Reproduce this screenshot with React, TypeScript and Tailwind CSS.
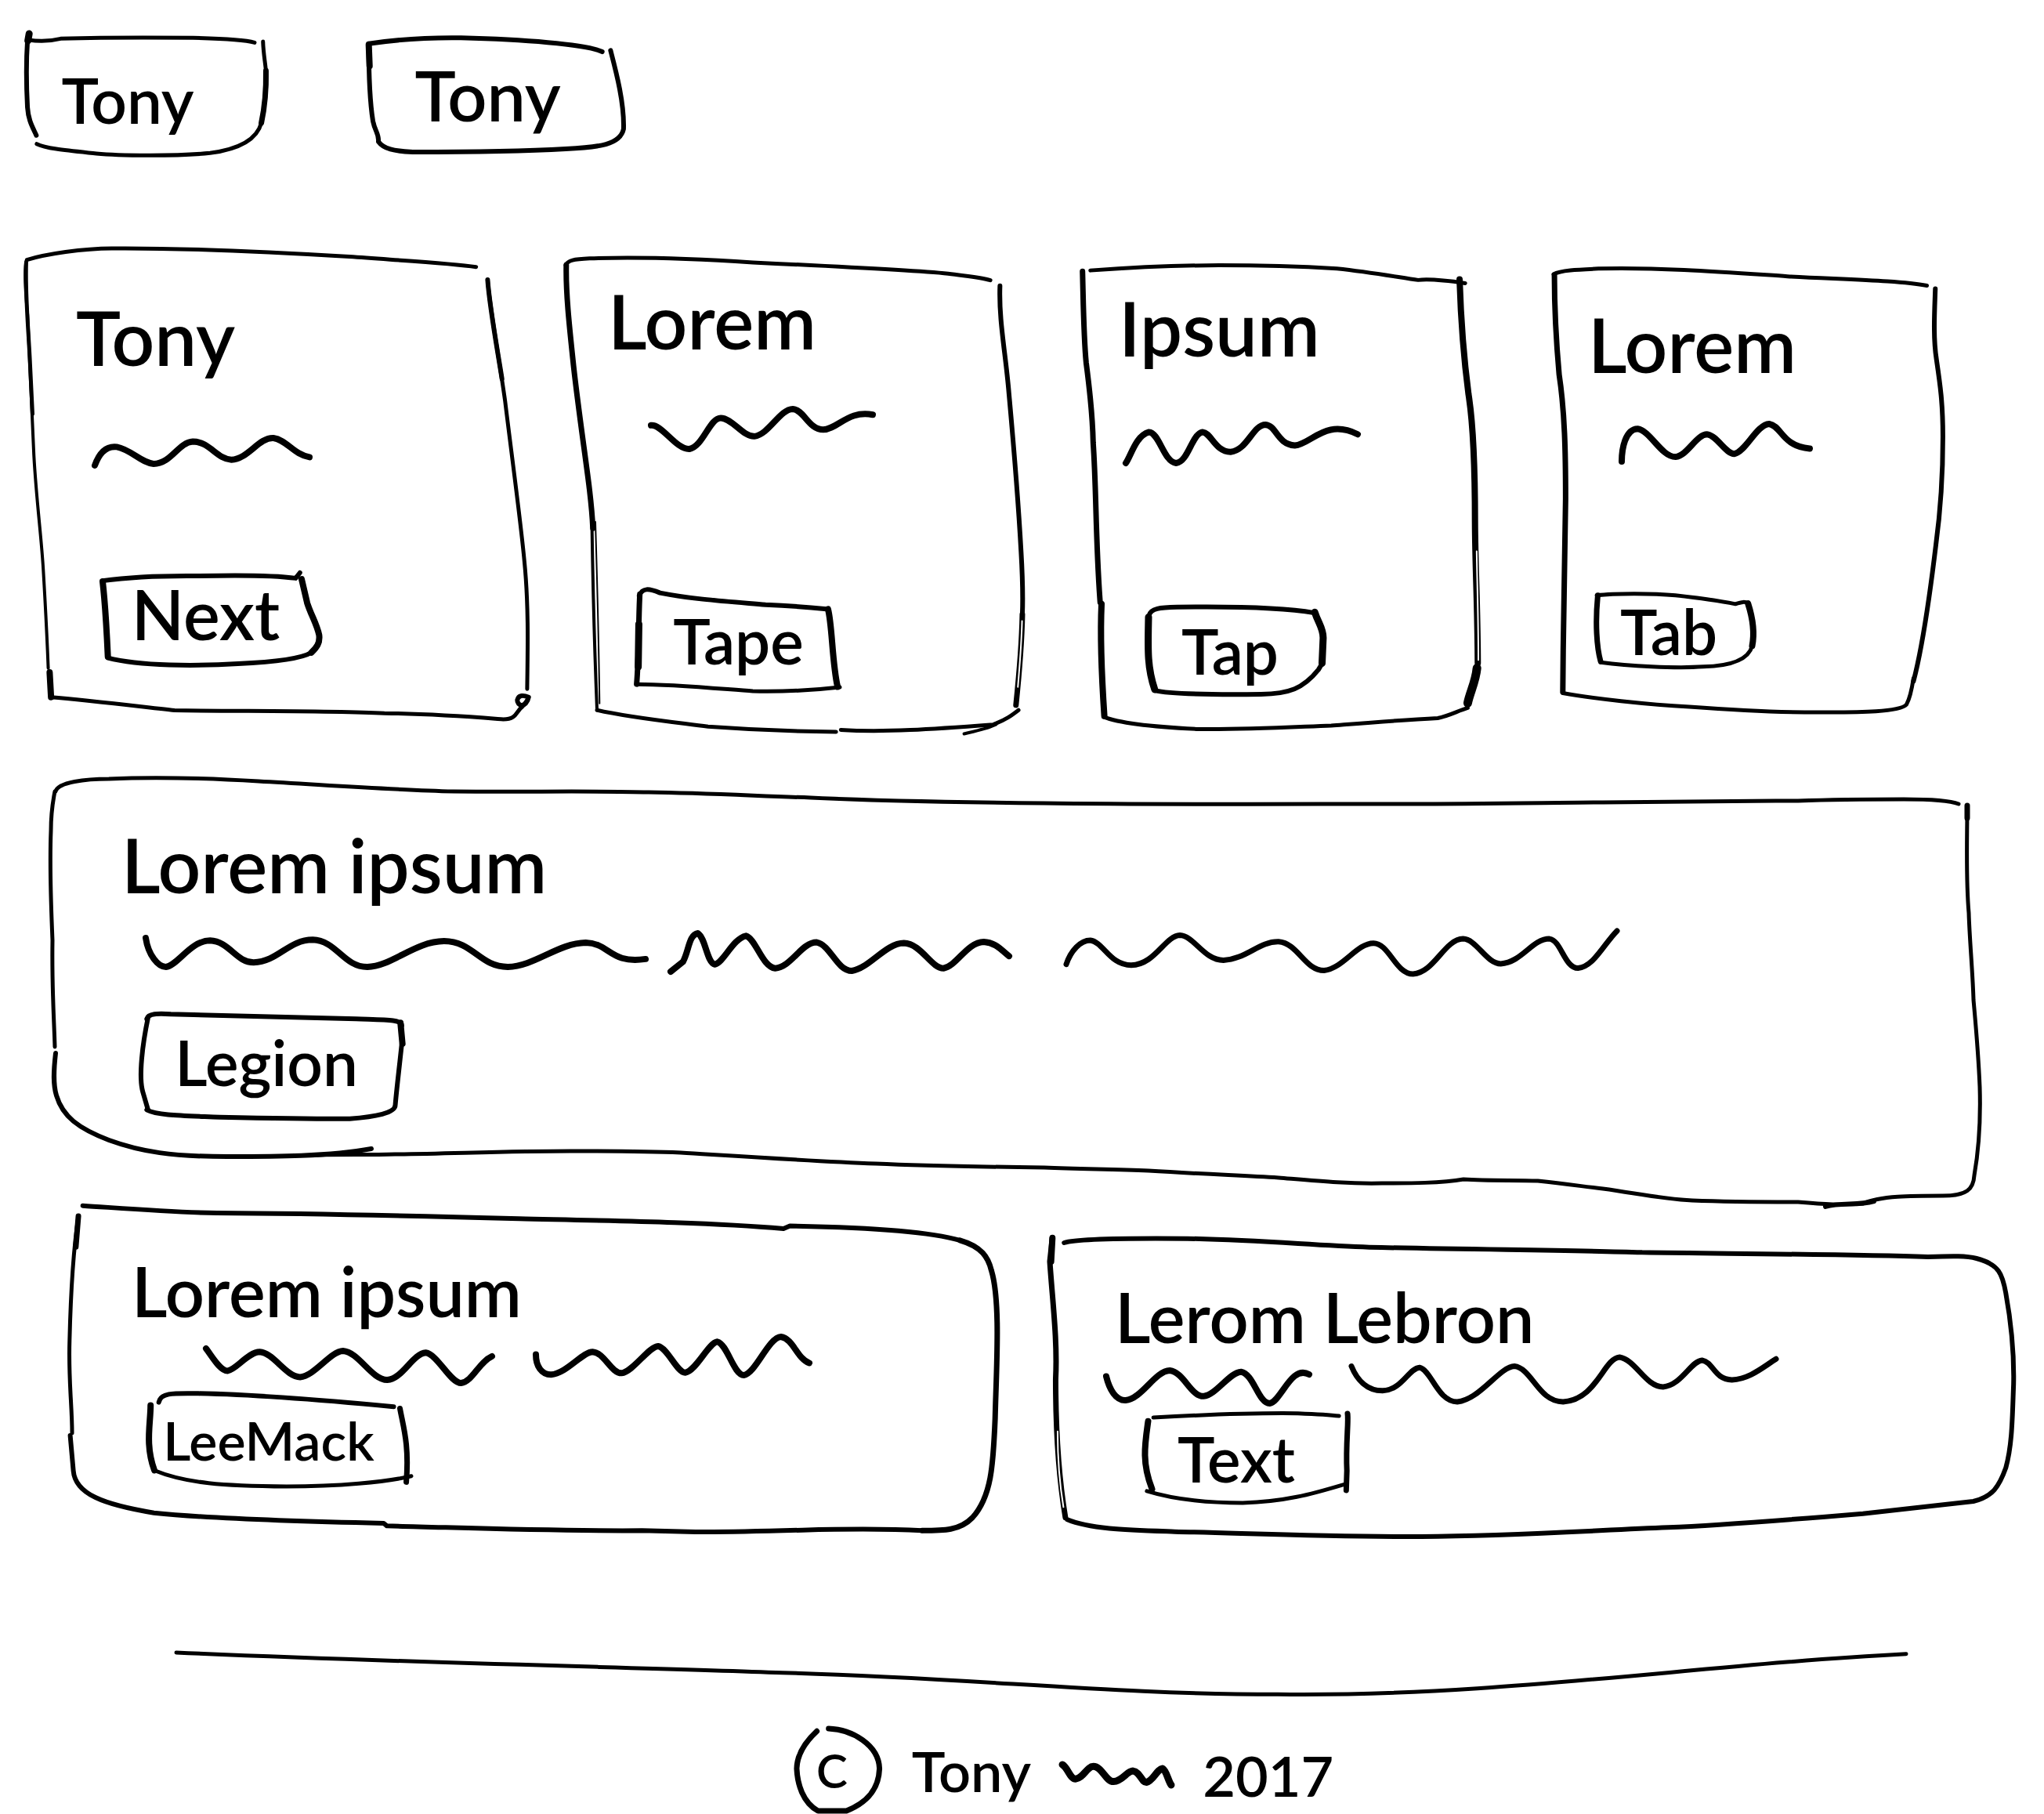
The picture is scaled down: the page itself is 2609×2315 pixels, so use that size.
import type { ReactNode } from "react";

type Stroke = { d: string; w: number; paper?: boolean };

type InkProps = { box: string; strokes: Stroke[]; className: string };

/** Pen strokes that stretch with the element they belong to. */
function Ink({ box, strokes, className }: InkProps) {
  return (
    <svg
      aria-hidden="true"
      viewBox={box}
      preserveAspectRatio="none"
      fill="none"
      strokeLinecap="round"
      strokeLinejoin="round"
      className={`overflow-visible ${className}`}
    >
      {strokes.map((s) => (
        <path
          key={s.d}
          d={s.d}
          strokeWidth={s.w}
          stroke={s.paper ? "#fff" : "#000"}
          vectorEffect="non-scaling-stroke"
        />
      ))}
    </svg>
  );
}

type SketchProps = {
  box: string;
  strokes: Stroke[];
  className: string;
  children: ReactNode;
};

function SketchButton({ box, strokes, className, children }: SketchProps) {
  return (
    <button
      type="button"
      className={`relative flex shrink-0 cursor-pointer items-center justify-center leading-none ${className}`}
    >
      <Ink box={box} strokes={strokes} className="pointer-events-none absolute inset-0 h-full w-full" />
      <span>{children}</span>
    </button>
  );
}

function SketchCard({ box, strokes, className, children }: SketchProps) {
  return (
    <article className={`relative flex flex-col items-start ${className}`}>
      <Ink box={box} strokes={strokes} className="pointer-events-none absolute inset-0 h-full w-full" />
      {children}
    </article>
  );
}

const navOne: Stroke[] = [
  { d: "M70 70 L66 95 C62 190 64 290 66 350 C68 400 78 425 87 457", w: 6 },
  { d: "M70 68 L67 95", w: 9 },
  { d: "M68 92 C90 97 120 97 145 87 C250 82 370 82 460 84 C520 86 580 90 606 102", w: 5 },
  { d: "M626 98 C627 150 632 180 634 230 C634 300 630 350 622 410 C612 470 570 510 500 525 C420 538 280 535 230 527 C160 515 110 508 88 490", w: 5 },
  { d: "M633 210 C634 300 630 350 622 410", w: 7 },
];

const navTwo: Stroke[] = [
  { d: "M880 104 C940 90 1010 80 1100 82 C1240 88 1400 105 1437 135", w: 6 },
  { d: "M880 104 C880 200 882 320 890 400 C895 440 905 450 903 478 C915 505 940 515 985 518 C1100 518 1250 515 1350 506 C1430 500 1480 490 1488 430 C1490 330 1470 210 1457 130", w: 6 },
  { d: "M880 108 L882 190", w: 8 },
];

const cardOne: Stroke[] = [
  { d: "M78 78 C130 60 240 42 320 42 C520 40 800 55 1000 68 C1150 80 1290 88 1362 100", w: 5 },
  { d: "M76 82 C70 110 74 180 80 250 C85 400 92 550 98 690 C105 830 120 950 125 1050 C132 1180 136 1270 139 1355", w: 4 },
  { d: "M76 85 C73 180 80 260 86 380 L94 560", w: 5 },
  { d: "M143 1368 L147 1446", w: 8 },
  { d: "M147 1446 C250 1455 400 1475 500 1487 C700 1490 950 1488 1100 1496 C1250 1498 1380 1510 1440 1515 C1480 1515 1475 1490 1495 1475 L1512 1448", w: 5 },
  { d: "M1512 1446 C1480 1430 1472 1460 1488 1470 C1500 1475 1510 1460 1512 1446", w: 6 },
  { d: "M1395 140 C1400 220 1430 400 1445 520 C1465 700 1490 900 1500 1020 C1512 1150 1510 1280 1508 1420", w: 5 },
  { d: "M1395 140 C1400 220 1420 340 1436 450", w: 6 },
];

const nextFrame: Stroke[] = [
  { d: "M293 1080 C360 1070 460 1064 560 1065 C680 1062 780 1062 845 1072 L857 1055", w: 6 },
  { d: "M293 1082 C298 1130 304 1220 308 1318", w: 8 },
  { d: "M308 1322 C400 1348 560 1348 680 1340 C780 1335 860 1325 890 1305", w: 6 },
  { d: "M862 1075 L878 1150 C890 1190 905 1215 912 1250 C915 1275 905 1290 890 1305", w: 8 },
];

const cardTwo: Stroke[] = [
  { d: "M55 92 C62 78 80 74 130 72 C300 66 480 74 640 84 C900 96 1150 108 1250 118 C1310 126 1350 128 1382 138", w: 5 },
  { d: "M57 92 C55 180 68 290 80 400 C95 530 115 660 128 760 C134 810 138 840 140 890", w: 7 },
  { d: "M137 870 C139 1000 145 1250 153 1440", w: 4 },
  { d: "M148 870 C152 1000 158 1200 161 1420", w: 2 },
  { d: "M153 1440 C250 1462 380 1475 500 1490 C640 1500 800 1505 900 1506", w: 5 },
  { d: "M915 1500 C1050 1508 1200 1498 1390 1484 C1430 1470 1450 1455 1470 1440", w: 5 },
  { d: "M1300 1512 C1350 1500 1380 1495 1400 1483", w: 4 },
  { d: "M1412 155 C1408 260 1430 360 1440 480 C1455 640 1470 820 1478 960 C1484 1060 1484 1100 1482 1150", w: 6 },
  { d: "M1482 1150 C1480 1250 1470 1350 1462 1425", w: 7 },
  { d: "M1481 1170 C1479 1250 1472 1320 1468 1370", w: 2, paper: true },
];

const tapeFrame: Stroke[] = [
  { d: "M285 1095 C295 1070 315 1072 350 1086 C450 1105 560 1112 680 1122 C760 1125 820 1130 870 1135", w: 6 },
  { d: "M287 1090 C282 1180 285 1270 277 1362", w: 7 },
  { d: "M284 1180 L282 1310", w: 9 },
  { d: "M277 1362 C400 1362 560 1378 640 1383 C740 1385 850 1378 912 1371", w: 5 },
  { d: "M875 1135 C888 1180 888 1300 905 1370", w: 8 },
];

const cardThree: Stroke[] = [
  { d: "M90 62 C250 52 400 46 550 46 C700 46 850 50 970 56 C1100 68 1200 85 1260 92 C1300 88 1350 92 1428 102", w: 5 },
  { d: "M62 65 C65 160 66 270 75 350 C90 450 98 520 100 600 C112 750 108 900 125 1100", w: 7 },
  { d: "M130 1105 C125 1200 128 1300 140 1455", w: 8 },
  { d: "M137 1458 C200 1480 330 1490 470 1496 C640 1498 800 1490 950 1485 C1100 1475 1200 1468 1330 1462 C1370 1455 1400 1440 1437 1430", w: 5 },
  { d: "M1408 90 C1412 200 1425 350 1440 450 C1460 560 1463 700 1463 850 C1464 1000 1472 1100 1473 1290", w: 8 },
  { d: "M1469 940 C1471 1050 1475 1150 1475 1280", w: 2, paper: true },
  { d: "M1470 1305 C1465 1350 1445 1380 1437 1415", w: 11 },
];

const tapFrame: Stroke[] = [
  { d: "M300 1140 C305 1118 340 1115 400 1114 C560 1112 760 1112 890 1132", w: 6 },
  { d: "M298 1145 C296 1240 292 1300 320 1372", w: 9 },
  { d: "M320 1375 C380 1388 600 1388 700 1387 C800 1385 850 1370 905 1310 L922 1285", w: 6 },
  { d: "M892 1130 C905 1165 922 1180 922 1210 L918 1290", w: 9 },
];

const cardFour: Stroke[] = [
  { d: "M65 75 C90 62 150 60 230 57 C450 52 700 70 900 82 C1100 92 1300 95 1398 112", w: 5 },
  { d: "M68 78 C68 180 75 300 85 400 C105 520 108 650 108 800 C104 950 100 1200 98 1425", w: 7 },
  { d: "M98 1428 C200 1445 400 1465 550 1472 C700 1482 900 1492 1050 1490 C1150 1490 1300 1490 1325 1465 C1340 1440 1345 1410 1350 1380", w: 5 },
  { d: "M1428 122 C1425 200 1420 280 1432 350 C1445 430 1455 490 1455 600 C1455 700 1448 830 1430 950 C1410 1100 1385 1270 1350 1390", w: 6 },
];

const tabFrame: Stroke[] = [
  { d: "M218 1112 C280 1105 420 1105 500 1112 C580 1120 660 1130 715 1140 C740 1132 750 1132 760 1138", w: 5 },
  { d: "M222 1112 C212 1200 218 1280 232 1325", w: 7 },
  { d: "M232 1328 C330 1340 500 1348 600 1342 C680 1340 760 1325 775 1275", w: 5 },
  { d: "M760 1138 C775 1180 785 1230 775 1275", w: 8 },
];

const wideCard: Stroke[] = [
  { d: "M71 1010 C74 998 110 994 139 994 C200 991 280 994 330 997 C420 1002 500 1008 579 1010 C670 1011 750 1009 828 1011 C900 1012 970 1016 1035 1018 C1120 1022 1230 1024 1333 1025 C1480 1027 1650 1026 1797 1026 C1900 1026 2000 1024 2046 1024 C2150 1023 2220 1022 2295 1022 C2350 1020 2400 1020 2430 1020 C2470 1020 2490 1022 2500 1026", w: 5 },
  { d: "M70 1010 C66 1030 65 1040 65 1060 C63 1110 65 1150 67 1200 C66 1260 69 1300 70 1336", w: 5 },
  { d: "M71 1344 C68 1370 68 1385 72 1398 C80 1425 100 1440 139 1455 C180 1470 220 1476 290 1476 C350 1476 420 1476 474 1466", w: 6 },
  { d: "M405 1474 C440 1473 470 1474 504 1473 C580 1472 650 1469 728 1469 C780 1469 820 1469 869 1471 C950 1476 1040 1482 1118 1485 C1180 1488 1250 1489 1333 1490 C1380 1492 1420 1492 1466 1494 C1530 1498 1580 1500 1632 1503 C1680 1507 1720 1511 1764 1510 C1800 1510 1840 1510 1868 1505 C1900 1507 1930 1506 1963 1507 C2000 1511 2020 1514 2046 1517 C2090 1523 2120 1530 2160 1532 C2210 1534 2250 1534 2295 1534 C2330 1537 2350 1538 2378 1536 C2400 1526 2440 1526 2480 1526 C2510 1526 2519 1518 2520 1500 C2527 1460 2528 1420 2527 1387 C2525 1340 2522 1310 2519 1276 C2518 1240 2514 1200 2513 1165 C2509 1120 2511 1070 2511 1028", w: 5 },
  { d: "M2511 1028 L2511 1044", w: 7 },
  { d: "M2330 1540 C2350 1534 2370 1539 2392 1533", w: 6 },
];

const legionFrame: Stroke[] = [
  { d: "M178 960 C180 940 195 938 215 942 C320 948 430 955 500 960 C545 964 570 962 570 985", w: 6 },
  { d: "M180 955 C172 1050 165 1180 172 1240 L180 1308", w: 6 },
  { d: "M178 1308 C195 1330 230 1330 290 1336 C370 1340 430 1343 490 1342 C530 1335 560 1320 560 1290 C562 1230 566 1150 570 1055", w: 6 },
  { d: "M568 975 L571 1055", w: 8 },
];

const lowerLeft: Stroke[] = [
  { d: "M57 82 C120 92 200 108 270 110 C450 112 600 122 750 132 C900 140 1050 145 1170 170 L1180 160 C1300 165 1400 180 1450 215", w: 6 },
  { d: "M1450 215 C1485 240 1495 280 1500 330 C1515 450 1508 700 1506 900 C1503 1080 1500 1200 1470 1280 C1450 1330 1425 1330 1390 1330", w: 7 },
  { d: "M1390 1330 C1330 1322 1250 1325 1200 1328 C1130 1333 1080 1336 1030 1335 L945 1330 C800 1333 650 1318 540 1312 L535 1302 C400 1295 250 1282 170 1262 C90 1230 45 1190 42 1100 L37 965", w: 6 },
  { d: "M50 122 C42 250 38 400 36 600 C34 750 40 850 40 955", w: 5 },
  { d: "M50 122 L46 240", w: 7 },
];

const leeMackFrame: Stroke[] = [
  { d: "M177 838 C180 800 200 803 240 804 C330 808 450 832 550 855", w: 6 },
  { d: "M164 850 C164 920 155 1000 170 1100", w: 8 },
  { d: "M170 1100 C220 1150 280 1160 380 1162 C460 1162 540 1145 578 1122", w: 5 },
  { d: "M560 862 C565 930 575 1000 570 1145", w: 7 },
];

const lowerRight: Stroke[] = [
  { d: "M70 78 C90 62 170 60 260 62 C380 68 450 88 540 95 C700 105 850 105 960 115 C1100 120 1280 122 1400 132 C1440 128 1460 128 1475 138 C1510 160 1515 200 1520 270 C1528 380 1533 500 1532 620 C1530 750 1530 850 1520 940 C1510 1010 1500 1050 1470 1068 C1430 1080 1350 1100 1300 1115 C1180 1140 1080 1160 1000 1168 C880 1180 760 1200 620 1203 C480 1205 350 1190 240 1184 C170 1178 110 1175 75 1138", w: 6 },
  { d: "M52 58 L48 150 C52 300 60 450 57 600 C57 780 60 950 72 1130", w: 7 },
  { d: "M52 60 L50 150", w: 8 },
  { d: "M60 800 C60 900 63 1000 69 1090", w: 2, paper: true },
];

const textFrame: Stroke[] = [
  { d: "M208 748 C280 738 370 730 430 732 C460 735 480 738 493 742", w: 5 },
  { d: "M200 762 C195 850 190 920 206 1020", w: 8 },
  { d: "M198 1028 C240 1060 290 1073 345 1073 C410 1068 450 1040 500 1003", w: 5 },
  { d: "M506 733 C508 760 503 850 505 950 L504 1025", w: 7 },
];

export default function App() {
  return (
    <div className="min-h-screen overflow-hidden bg-white font-[Lato,'Open_Sans',sans-serif] font-semibold text-black">
      <header>
        <nav aria-label="Main" className="flex items-center gap-[128px] pt-[43px] pl-[34px]">
          <SketchButton box="64 68 570 465" strokes={navOne} className="h-[155px] w-[306px] pt-3 pr-12 text-[80px]">
            Tony
          </SketchButton>
          <SketchButton box="875 78 615 440" strokes={navTwo} className="h-[147px] w-[329px] pr-5 text-[88px]">
            Tony
          </SketchButton>
        </nav>
      </header>

      <main>
        <section className="mt-[119px] grid grid-cols-[689fr_659fr_602fr_498fr] items-start pr-32 pl-[33px]">
          <SketchCard box="75 42 1440 1473" strokes={cardOne} className="mr-[46px] pt-[65px] pb-[69px] pl-16">
            <h2 className="text-[96px] leading-none">Tony</h2>
            <Ink
              box="272 634 613 86"
              className="mt-[81px] ml-6 h-[35px] w-[274px]"
              strokes={[{ d: "M272 720 C285 680 305 658 335 662 C375 670 405 712 440 715 C490 715 510 648 552 645 C600 645 620 700 662 702 C710 700 740 632 782 634 C820 640 840 685 885 694", w: 8 }]}
            />
            <SketchButton box="293 1060 625 285" strokes={nextFrame} className="mt-[139px] ml-[34px] h-[116px] w-[279px] pr-4 pb-4 text-[88px]">
              Next
            </SketchButton>
          </SketchCard>

          <SketchCard box="55 70 1432 1436" strokes={cardTwo} className="mt-3 mr-[74px] pt-8 pb-[52px] pl-[54px]">
            <h2 className="text-[96px] leading-none">Lorem</h2>
            <Ink
              box="322 528 693 120"
              className="mt-[65px] ml-[55px] h-[51px] w-[283px]"
              strokes={[{ d: "M322 577 C355 572 400 650 442 648 C485 640 505 555 540 555 C575 555 610 612 645 610 C690 605 725 528 765 528 C800 530 815 590 860 590 C905 588 940 530 1015 545", w: 8 }]}
            />
            <SketchButton box="278 1075 634 308" strokes={tapeFrame} className="mt-[179px] ml-[37px] h-[130px] w-[259px] text-[80px]">
              Tape
            </SketchButton>
          </SketchCard>

          <SketchCard box="60 47 1415 1448" strokes={cardThree} className="mt-[22px] mr-24 pt-[31px] pb-11 pl-[47px]">
            <h2 className="text-[96px] leading-none">Ipsum</h2>
            <Ink
              box="215 545 830 120"
              className="mt-[76px] ml-[9px] h-[49px] w-[296px]"
              strokes={[{ d: "M215 665 C235 640 250 580 298 568 C335 570 350 660 395 665 C440 660 450 575 490 568 C520 570 535 630 590 630 C650 625 670 545 715 545 C755 548 755 605 820 610 C880 605 930 525 1045 575", w: 8 }]}
            />
            <SketchButton box="298 1112 627 275" strokes={tapFrame} className="mt-[183px] ml-[38px] h-[112px] w-[224px] pr-4 text-[80px]">
              Tap
            </SketchButton>
          </SketchCard>

          <SketchCard box="65 55 1393 1435" strokes={cardFour} className="mt-[25px] pt-[49px] pb-[57px] pl-11">
            <h2 className="text-[96px] leading-none">Lorem</h2>
            <Ink
              box="308 558 672 122"
              className="mt-[54px] ml-[43px] h-12 w-[240px]"
              strokes={[{ d: "M308 680 C308 640 320 575 365 574 C410 580 450 665 500 665 C545 660 575 590 615 592 C650 598 680 655 710 655 C750 650 790 560 835 558 C880 565 880 630 980 638", w: 8 }]}
            />
            <SketchButton box="215 1105 567 240" strokes={tabFrame} className="mt-[168px] ml-[10px] h-[95px] w-[202px] pr-4 text-[80px]">
              Tab
            </SketchButton>
          </SketchCard>
        </section>

        <section className="mt-[59px] mr-[81px] ml-16">
          <SketchCard box="64 993 2464 545" strokes={wideCard} className="pt-[62px] pb-[110px] pl-[91px]">
            <h2 className="text-[96px] leading-none">Lorem ipsum</h2>
            <div className="mt-[37px] ml-[31px] flex items-center">
              <Ink
                box="176 655 769 110"
                className="h-[37px] w-[638px]"
                strokes={[{ d: "M176 655 C180 720 195 765 207 765 C225 760 245 665 275 665 C305 668 315 748 342 748 C380 745 395 662 433 662 C470 665 480 765 517 765 C555 762 590 668 635 667 C680 668 690 765 733 765 C775 762 810 675 853 673 C890 675 890 755 945 735", w: 8 }]}
              />
              <Ink
                box="984 620 521 148"
                className="ml-8 h-[49px] w-[432px]"
                strokes={[{ d: "M984 768 L1003 730 C1012 690 1012 625 1026 620 C1038 640 1040 735 1052 740 C1065 735 1080 640 1100 630 C1115 640 1125 750 1145 755 C1170 750 1185 655 1209 655 C1230 665 1240 765 1263 765 C1290 755 1315 658 1343 658 C1370 660 1385 755 1404 755 C1425 745 1440 655 1466 653 C1485 655 1495 690 1505 708", w: 8 }]}
              />
              <Ink
                box="73 563 848 147"
                className="ml-[73px] h-[55px] w-[703px]"
                strokes={[{ d: "M73 677 C80 630 95 595 110 595 C130 600 140 680 173 680 C210 678 225 580 248 578 C270 580 285 663 315 663 C350 660 370 598 400 600 C430 605 440 698 470 698 C500 690 520 605 546 605 C570 605 580 710 607 710 C640 705 655 592 684 590 C705 592 720 675 742 675 C775 670 790 590 817 590 C835 595 840 690 861 690 C885 685 900 610 921 563", w: 7 }]}
              />
            </div>
            <SketchButton box="168 938 407 405" strokes={legionFrame} className="mt-[50px] ml-6 h-[135px] w-[338px] pr-4 pb-3 text-[80px]">
              Legion
            </SketchButton>
          </SketchCard>
        </section>

        <section className="grid grid-cols-[1187fr_1231fr] items-start gap-[65px] pr-[38px] pl-[88px]">
          <SketchCard box="35 80 1477 1258" strokes={lowerLeft} className="pt-[65px] pb-[59px] pl-20">
            <h2 className="text-[88px] leading-none">Lorem ipsum</h2>
            <div className="mt-[15px] ml-[95px] flex items-start">
              <Ink
                box="253 632 453 133"
                className="mt-[15px] h-11 w-[365px]"
                strokes={[{ d: "M253 632 C262 660 275 718 287 718 C300 715 320 645 338 645 C360 648 380 742 402 742 C425 738 450 643 470 641 C495 645 515 753 540 753 C565 748 580 652 601 648 C620 655 640 765 657 765 C675 760 685 685 706 662", w: 8 }]}
              />
              <Ink
                box="776 587 434 148"
                className="ml-14 h-[49px] w-[349px]"
                strokes={[{ d: "M776 655 C776 700 785 733 800 733 C825 728 850 645 866 645 C885 648 895 727 912 727 C930 722 955 625 970 623 C985 630 1000 725 1013 725 C1030 720 1050 610 1064 606 C1080 615 1090 735 1106 735 C1125 728 1145 590 1165 587 C1185 595 1190 670 1210 688", w: 8 }]}
              />
            </div>
            <SketchButton box="160 803 418 359" strokes={leeMackFrame} className="mt-[13px] ml-[21px] h-[119px] w-[336px] pr-7 text-[68px]">
              LeeMack
            </SketchButton>
          </SketchCard>

          <SketchCard box="48 57 1485 1146" strokes={lowerRight} className="mt-[41px] pt-[57px] pb-[43px] pl-[83px]">
            <h2 className="text-[88px] leading-none">Lerom Lebron</h2>
            <div className="mt-2 -ml-[11px] flex items-start">
              <Ink
                box="135 568 313 124"
                className="mt-[17px] h-[42px] w-[259px]"
                strokes={[{ d: "M135 590 C140 640 150 682 165 680 C190 675 210 570 233 568 C255 575 265 665 285 665 C305 660 325 575 343 573 C362 580 370 692 387 692 C405 685 420 545 448 583", w: 8 }]}
              />
              <Ink
                box="512 515 654 173"
                className="ml-[54px] h-[57px] w-[542px]"
                strokes={[{ d: "M512 550 C520 600 535 645 560 645 C590 642 600 558 617 555 C635 565 645 688 675 688 C710 680 740 552 763 550 C790 558 800 688 838 688 C890 680 900 520 925 515 C950 525 965 630 992 630 C1020 625 1035 530 1052 527 C1070 535 1070 600 1098 603 C1125 600 1145 555 1166 522", w: 7 }]}
              />
            </div>
            <SketchButton box="197 730 315 343" strokes={textFrame} className="mt-3 ml-10 h-[115px] w-[262px] pr-8 text-[80px]">
              Text
            </SketchButton>
          </SketchCard>
        </section>
      </main>

      <footer className="mt-[148px]">
        <div className="pr-[176px] pl-[225px]">
          <Ink
            box="135 1269 1327 32"
            className="block h-[55px] w-full"
            strokes={[{ d: "M135 1269 C350 1278 500 1280 600 1284 C750 1288 850 1300 980 1300 C1150 1302 1300 1278 1462 1270", w: 5 }]}
          />
        </div>
        <p className="mt-[42px] flex items-center justify-center pl-[108px] text-[72px] leading-none">
          <span className="relative flex h-[106px] w-[110px] items-center justify-center pr-4 text-[60px]">
            <Ink
              box="70 87 227 318"
              className="absolute inset-0 h-full w-full"
              strokes={[{ d: "M127 97 C95 140 75 190 74 240 C76 300 90 370 130 402 L205 402 C260 370 290 320 292 240 C290 150 220 90 158 87", w: 7 }]}
            />
            C
          </span>
          <span className="ml-[39px]">Tony</span>
          <Ink
            box="780 228 288 77"
            className="mt-3 ml-10 h-[26px] w-[139px]"
            strokes={[{ d: "M780 228 C795 240 800 282 815 282 C835 280 845 235 862 235 C885 235 895 292 915 292 C940 290 950 252 967 252 C985 255 990 295 1002 295 C1020 290 1030 245 1045 243 C1055 250 1060 290 1068 305", w: 9 }]}
          />
          <span className="mt-3 ml-10">2017</span>
        </p>
      </footer>
    </div>
  );
}
